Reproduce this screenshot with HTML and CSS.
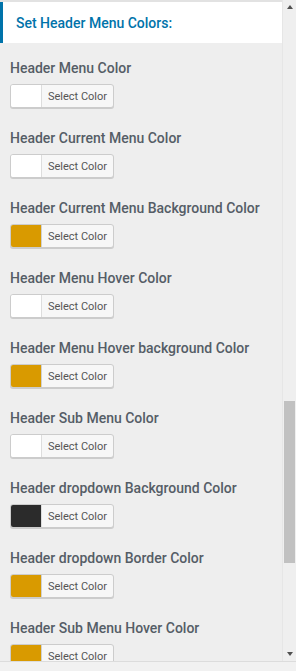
FILE: index.html
```html
<!DOCTYPE html>
<html>
<head>
<meta charset="utf-8">
<link rel="stylesheet" href="styles.css">
</head>
<body>
<div class="frame">
  <div class="panel">
    <div class="heading">Set Header Menu Colors:</div>
    <div class="list">
      <div class="field"><div class="label">Header Menu Color</div><button class="picker"><span class="swatch white"></span><span class="btn-text">Select Color</span></button></div>
      <div class="field"><div class="label">Header Current Menu Color</div><button class="picker"><span class="swatch white"></span><span class="btn-text">Select Color</span></button></div>
      <div class="field"><div class="label">Header Current Menu Background Color</div><button class="picker"><span class="swatch gold"></span><span class="btn-text">Select Color</span></button></div>
      <div class="field"><div class="label">Header Menu Hover Color</div><button class="picker"><span class="swatch white"></span><span class="btn-text">Select Color</span></button></div>
      <div class="field"><div class="label">Header Menu Hover background Color</div><button class="picker"><span class="swatch gold"></span><span class="btn-text">Select Color</span></button></div>
      <div class="field"><div class="label">Header Sub Menu Color</div><button class="picker"><span class="swatch white"></span><span class="btn-text">Select Color</span></button></div>
      <div class="field"><div class="label">Header dropdown Background Color</div><button class="picker"><span class="swatch dark"></span><span class="btn-text">Select Color</span></button></div>
      <div class="field"><div class="label">Header dropdown Border Color</div><button class="picker"><span class="swatch gold"></span><span class="btn-text">Select Color</span></button></div>
      <div class="field"><div class="label">Header Sub Menu Hover Color</div><button class="picker"><span class="swatch gold"></span><span class="btn-text">Select Color</span></button></div>
    </div>
  </div>
  <div class="scrollbar">
    <div class="arrow up"></div>
    <div class="track"><div class="thumb"></div></div>
    <div class="arrow down"></div>
  </div>
</div>
<div class="hbar"></div>
</body>
</html>
```
FILE: styles.css
```css
html, body {
  margin: 0;
  padding: 0;
  background: #eeeeee;
  font-family: Roboto, "Liberation Sans", sans-serif;
}
.frame {
  display: flex;
  height: 661px;
  overflow: hidden;
}
.panel {
  width: 282px;
  flex: none;
  background: #eeeeee;
  border-top: 2px solid #e2e2e2;
  box-sizing: border-box;
  overflow: hidden;
}
.heading {
  background: #ffffff;
  border-left: 3px solid #0073aa;
  height: 41px;
  box-sizing: border-box;
  padding: 0 0 0 13px;
  display: flex;
  align-items: center;
  color: #0073aa;
  font-size: 14px;
  font-weight: 500;
}
.list {
  display: flex;
  flex-direction: column;
  gap: 20px;
  padding: 15px 0 0 10px;
}
.field {
  display: flex;
  flex-direction: column;
  align-items: flex-start;
  gap: 6px;
}
.label {
  font-size: 14px;
  line-height: 20px;
  font-weight: 500;
  color: #555d66;
}
.picker {
  display: flex;
  align-items: stretch;
  height: 24px;
  width: 104px;
  padding: 0;
  margin: 0;
  border: 1px solid #cccccc;
  border-radius: 3px;
  background: #f7f7f7;
  box-shadow: 0 1px 0 #cccccc;
  box-sizing: border-box;
  overflow: hidden;
  font-family: inherit;
}
.swatch {
  width: 30px;
  flex: none;
  border-right: 1px solid #dddddd;
}
.swatch.white { background: #ffffff; }
.swatch.gold { background: #d99a00; border-right-color: #d0d0d0; }
.swatch.dark { background: #2b2b2b; }
.btn-text {
  flex: 1;
  display: flex;
  align-items: center;
  justify-content: center;
  font-size: 11px;
  color: #555555;
}
.scrollbar {
  width: 14px;
  flex: none;
  background: #efefef;
  border-left: 1px solid #e6e6e6;
  box-sizing: border-box;
  display: flex;
  flex-direction: column;
}
.arrow {
  height: 14px;
  flex: none;
  display: flex;
  align-items: center;
  justify-content: center;
}
.arrow.up::before {
  content: "";
  border-left: 3.5px solid transparent;
  border-right: 3.5px solid transparent;
  border-bottom: 4px solid #505050;
}
.arrow.down::before {
  content: "";
  border-left: 3.5px solid transparent;
  border-right: 3.5px solid transparent;
  border-top: 4px solid #505050;
}
.track {
  flex: 1;
  padding-top: 387px;
}
.thumb {
  margin-left: 1px;
  width: 11px;
  height: 162px;
  background: #c1c1c1;
}
.hbar {
  height: 10px;
  border-top: 1px solid #dcdcdc;
  background: #f1f1f1;
}
```
